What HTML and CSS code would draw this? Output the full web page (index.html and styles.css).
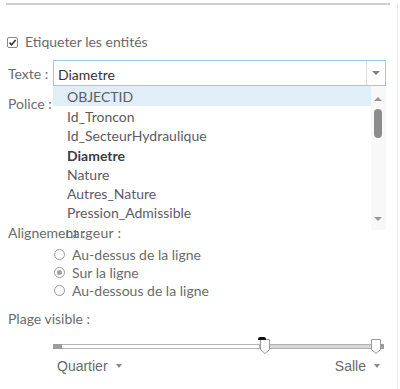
FILE: index.html
```html
<!DOCTYPE html>
<html lang="fr">
<head>
<meta charset="utf-8">
<title>Étiquettes</title>
<link rel="stylesheet" href="styles.css">
</head>
<body>
<div class="panel">
  <div class="rule"></div>

  <label class="check-row">
    <span class="checkbox">
      <svg width="9" height="9" viewBox="0 0 9 9"><path d="M1.5 4.6 L3.6 6.8 L7.6 2" fill="none" stroke="#333" stroke-width="1.6"/></svg>
    </span>
    <span>Etiqueter les entités</span>
  </label>

  <div class="field-row text-row">
    <span class="label">Texte :</span>
    <div class="select">
      <span class="select-value">Diametre</span>
      <span class="select-arrow"><span class="tri"></span></span>
      <div class="menu">
        <ul class="menu-list">
          <li class="hover">OBJECTID</li>
          <li>Id_Troncon</li>
          <li>Id_SecteurHydraulique</li>
          <li class="sel">Diametre</li>
          <li>Nature</li>
          <li>Autres_Nature</li>
          <li>Pression_Admissible</li>
        </ul>
        <div class="scrollbar">
          <span class="sb-up"></span>
          <span class="sb-thumb"></span>
          <span class="sb-down"></span>
        </div>
      </div>
    </div>
  </div>

  <div class="field-row police-row">
    <span class="label">Police :</span>
  </div>

  <div class="field-row align-row">
    <span class="label">Alignement :</span>
    <span class="label ghost">Largeur :</span>
  </div>

  <div class="radios">
    <label class="radio-row"><span class="radio"></span>Au-dessus de la ligne</label>
    <label class="radio-row"><span class="radio on"></span>Sur la ligne</label>
    <label class="radio-row"><span class="radio"></span>Au-dessous de la ligne</label>
  </div>

  <div class="field-row range-label">
    <span class="label">Plage visible :</span>
  </div>

  <div class="slider">
    <span class="end end-left"></span>
    <span class="track-empty"></span>
    <span class="thumb-wrap">
      <span class="marker"></span>
      <svg class="thumb" width="10" height="15" viewBox="0 0 10 15"><path d="M0.5 0.5 H9.5 V10.5 L5 14.5 L0.5 10.5 Z" fill="#fff" stroke="#9a9a9a"/></svg>
    </span>
    <span class="track-fill"></span>
    <span class="thumb-wrap">
      <svg class="thumb" width="10" height="15" viewBox="0 0 10 15"><path d="M0.5 0.5 H9.5 V10.5 L5 14.5 L0.5 10.5 Z" fill="#fff" stroke="#9a9a9a"/></svg>
    </span>
    <span class="end end-right"></span>
  </div>

  <div class="scale-labels">
    <span class="scale">Quartier <span class="tri small"></span></span>
    <span class="scale">Salle <span class="tri small"></span></span>
  </div>
</div>
</body>
</html>
```

FILE: styles.css
```css
* { box-sizing: border-box; }

html, body {
  margin: 0;
  padding: 0;
  background: #fff;
}

body {
  font-family: Lato, "Open Sans", sans-serif;
  font-size: 14px;
  color: #6b6b6b;
}

.panel {
  width: 398px;
  height: 389px;
  padding-left: 8px;
  border-right: 1px solid #ececec;
}

.rule {
  margin: 3px 0 0 -2px;
  width: 384px;
  height: 2px;
  background: #cfcfcf;
}

.check-row {
  display: flex;
  align-items: center;
  gap: 7px;
  margin-top: 30px;
  height: 14px;
  line-height: 14px;
}

.checkbox {
  width: 11px;
  height: 11px;
  border: 1px solid #8a8a8a;
  border-radius: 2px;
  display: flex;
  align-items: center;
  justify-content: center;
  margin-left: -1px;
}
.checkbox svg { display: block; }

.field-row {
  display: flex;
  align-items: center;
}

.label {
  white-space: nowrap;
}

.text-row {
  margin-top: 11px;
  height: 26px;
}
.text-row .label { width: 45px; }

.select {
  position: relative;
  width: 333px;
  height: 26px;
  border: 1px solid #9cc8ea;
  display: flex;
  align-items: center;
}

.select-value {
  flex: 1;
  padding-left: 4px;
  padding-top: 2px;
  color: #333;
}

.select-arrow {
  width: 19px;
  height: 100%;
  border-left: 1px solid #dedede;
  display: flex;
  align-items: center;
  justify-content: center;
}

.tri {
  width: 0;
  height: 0;
  border-left: 4px solid transparent;
  border-right: 4px solid transparent;
  border-top: 4px solid #808080;
}

.menu {
  position: absolute;
  top: 25px;
  left: -1px;
  width: 333px;
  height: 144px;
  background: #fff;
  display: flex;
  z-index: 5;
  overflow: hidden;
}

.menu-list {
  list-style: none;
  margin: 0;
  padding: 0;
  flex: 1;
}

.menu-list li {
  height: 19.3px;
  line-height: 22px;
  padding-left: 14px;
  color: #5e5a66;
}
.menu-list li.hover {
  background: #e0eefa;
  height: 20px;
}
.menu-list li.sel {
  font-weight: bold;
  color: #3c3c44;
}

.scrollbar {
  width: 15px;
  background: #f8f8f8;
  position: relative;
}
.sb-up, .sb-down {
  position: absolute;
  left: 3px;
  width: 0;
  height: 0;
  border-left: 4px solid transparent;
  border-right: 4px solid transparent;
}
.sb-up { top: 11px; border-bottom: 4px solid #999; }
.sb-down { top: 131px; border-top: 4px solid #999; }
.sb-thumb {
  position: absolute;
  top: 23px;
  left: 3px;
  width: 8px;
  height: 29px;
  border-radius: 4px;
  background: #8c8c8c;
}

.police-row {
  margin-top: 7px;
  height: 20px;
}

.align-row {
  margin-top: 110px;
  height: 18px;
}
.align-row .ghost {
  margin-left: -20px;
  letter-spacing: 0.3px;
}

.radios {
  margin-top: 5px;
  padding-left: 46px;
  display: flex;
  flex-direction: column;
}
.radio-row {
  display: flex;
  align-items: center;
  gap: 7px;
  height: 17.7px;
}
.radio {
  width: 11px;
  height: 11px;
  border: 1px solid #9a9a9a;
  border-radius: 50%;
  display: flex;
  align-items: center;
  justify-content: center;
}
.radio.on::after {
  content: "";
  width: 5px;
  height: 5px;
  border-radius: 50%;
  background: #a0a0a0;
}

.range-label {
  margin-top: 10px;
  height: 18px;
}

.slider {
  margin-top: 14px;
  margin-left: 45px;
  width: 331px;
  height: 16px;
  display: flex;
  align-items: flex-start;
}

.end {
  height: 5px;
  margin-top: 3px;
  background: #9d9d9d;
}
.end-left { width: 9px; }
.end-right { width: 3px; }

.track-empty {
  width: 199px;
  height: 5px;
  margin-top: 3px;
  background: #fff;
  border: 1px solid #b3b3b3;
  border-left: none;
}

.track-fill {
  width: 101px;
  height: 5px;
  margin-top: 3px;
  background: #d7d7d7;
  border: 1px solid #b0b0b0;
  border-left: none;
  border-right: none;
}

.thumb-wrap {
  position: relative;
  width: 10px;
  height: 16px;
  margin-top: -2px;
}
.thumb { display: block; }
.marker {
  position: absolute;
  top: -2px;
  left: -2px;
  width: 8px;
  height: 3px;
  background: #111;
  border-radius: 2px 2px 0 0;
}

.scale-labels {
  margin-top: 1px;
  margin-left: 49px;
  width: 323px;
  display: flex;
  justify-content: space-between;
  font-family: "Liberation Sans", Arial, sans-serif;
  font-size: 14px;
  color: #6a6a6a;
}
.scale {
  display: flex;
  align-items: center;
  gap: 8px;
}
.tri.small {
  border-left-width: 3.5px;
  border-right-width: 3.5px;
  border-top-width: 4px;
  border-top-color: #8a8a8a;
}
```
